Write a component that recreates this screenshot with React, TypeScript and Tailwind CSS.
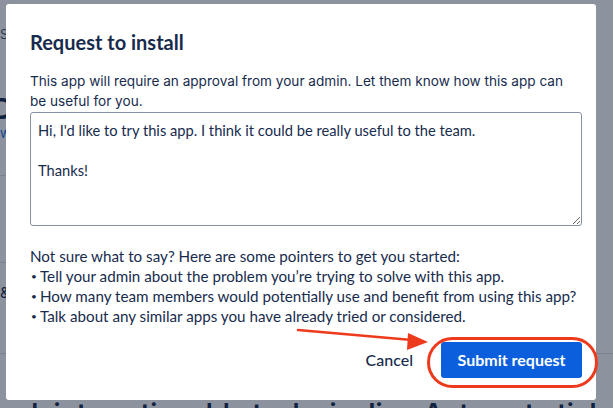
import React from "react";

const body = "font-['Lato','Noto_Sans',sans-serif]";

const pointers = [
  "Tell your admin about the problem you’re trying to solve with this app.",
  "How many team members would potentially use and benefit from using this app?",
  "Talk about any similar apps you have already tried or considered.",
];

function PageBehind() {
  return (
    <div className="flex h-full w-full flex-col bg-white text-[#172b4d]">
      <div className="flex h-[398px] w-full shrink-0">
        {/* left column, mostly hidden by the modal */}
        <div className="flex w-[7px] flex-col overflow-hidden">
          <div className="h-[26px] shrink-0" />
          <div className="h-[16px] shrink-0 whitespace-nowrap font-['Inter',sans-serif] text-[13px] leading-[16px] text-[#44546f]">
            Sites
          </div>
          <div className="h-[52px] shrink-0" />
          <div className="-ml-[7px] h-[30px] shrink-0 whitespace-nowrap font-['Inter',sans-serif] text-[28px] font-bold leading-[30px]">
            Do
          </div>
          <div className="h-[18px] shrink-0 whitespace-nowrap font-['Inter',sans-serif] text-[13px] text-[#0c66e4]">
            www
          </div>
          <div className="h-[34px] shrink-0 border-b border-[#dcdfe4]" />
          <div className="h-[87px] shrink-0 border-b border-[#dcdfe4]" />
          <div className="flex h-[60px] shrink-0 items-center whitespace-nowrap font-['Inter',sans-serif] text-[15px]">
            &amp;
          </div>
          <div className="h-[31px] shrink-0 border-b border-[#dcdfe4]" />
        </div>
        <div className="flex-1" />
        <div className="flex w-[17px] flex-col">
          <div className="h-[354px] shrink-0 border-b border-[#dcdfe4]" />
        </div>
      </div>
      <p className="-ml-[8px] whitespace-nowrap font-['Inter',sans-serif] text-[27px] font-semibold leading-[32px]">
        lock into actionable tasks in Jira. Automate ticket creation
      </p>
    </div>
  );
}

export default function App() {
  return (
    <div className="relative h-[408px] w-[613px] overflow-hidden">
      <PageBehind />

      {/* blanket */}
      <div className="absolute inset-0 bg-[#0b1a33]/[0.47]" />

      {/* modal */}
      <div className="absolute left-[6px] top-[4px] flex h-[396px] w-[590px] flex-col rounded-[3px] bg-white pb-[22px] pl-[24px] pr-[14px] pt-[25px] text-[#172b4d]">
        <h1 className={`${body} text-[20px] font-bold leading-[26px]`}>Request to install</h1>

        <p className="mt-[16px] font-['Inter',sans-serif] text-[13.6px] leading-[20px]">
          This app will require an approval from your admin. Let them know how this app can be useful for you.
        </p>

        <textarea
          className={`${body} mt-[1px] h-[114px] w-full shrink-0 resize-y rounded-[3px] border border-[#8590a2] px-[7px] py-[7px] text-[14.7px] leading-[20px] text-[#172b4d] outline-none`}
          defaultValue={"Hi, I'd like to try this app. I think it could be really useful to the team.\n\nThanks!"}
        />

        <div className={`${body} mt-[20px] text-[15.2px] leading-[20px]`}>
          <p>Not sure what to say? Here are some pointers to get you started:</p>
          <ul>
            {pointers.map((item) => (
              <li key={item} className="flex">
                <span className="w-[10px] shrink-0 pl-[1px] text-[10px]">•</span>
                <span>{item}</span>
              </li>
            ))}
          </ul>
        </div>

        <div className="mt-auto flex items-center justify-end gap-[16px]">
          <button className={`${body} px-[12px] text-[16px] font-medium text-[#172b4d]`}>Cancel</button>
          <button className={`${body} h-[36px] w-[141px] rounded-[3px] bg-[#0c5fdc] text-[16px] font-bold text-white`}>
            Submit request
          </button>
        </div>
      </div>

      {/* annotation: arrow + ring around the submit button */}
      <svg className="pointer-events-none absolute left-0 top-0" width="613" height="408" viewBox="0 0 613 408">
        <line x1="298" y1="330" x2="412" y2="340" stroke="#ee3a1c" strokeWidth="2.5" strokeLinecap="round" />
        <polygon points="428,342 408,333 407,350" fill="#ee3a1c" />
      </svg>
      <div className="pointer-events-none absolute left-[427px] top-[337px] h-[51px] w-[171px] rounded-[26px] border-[3px] border-[#ee3a1c]" />
    </div>
  );
}
